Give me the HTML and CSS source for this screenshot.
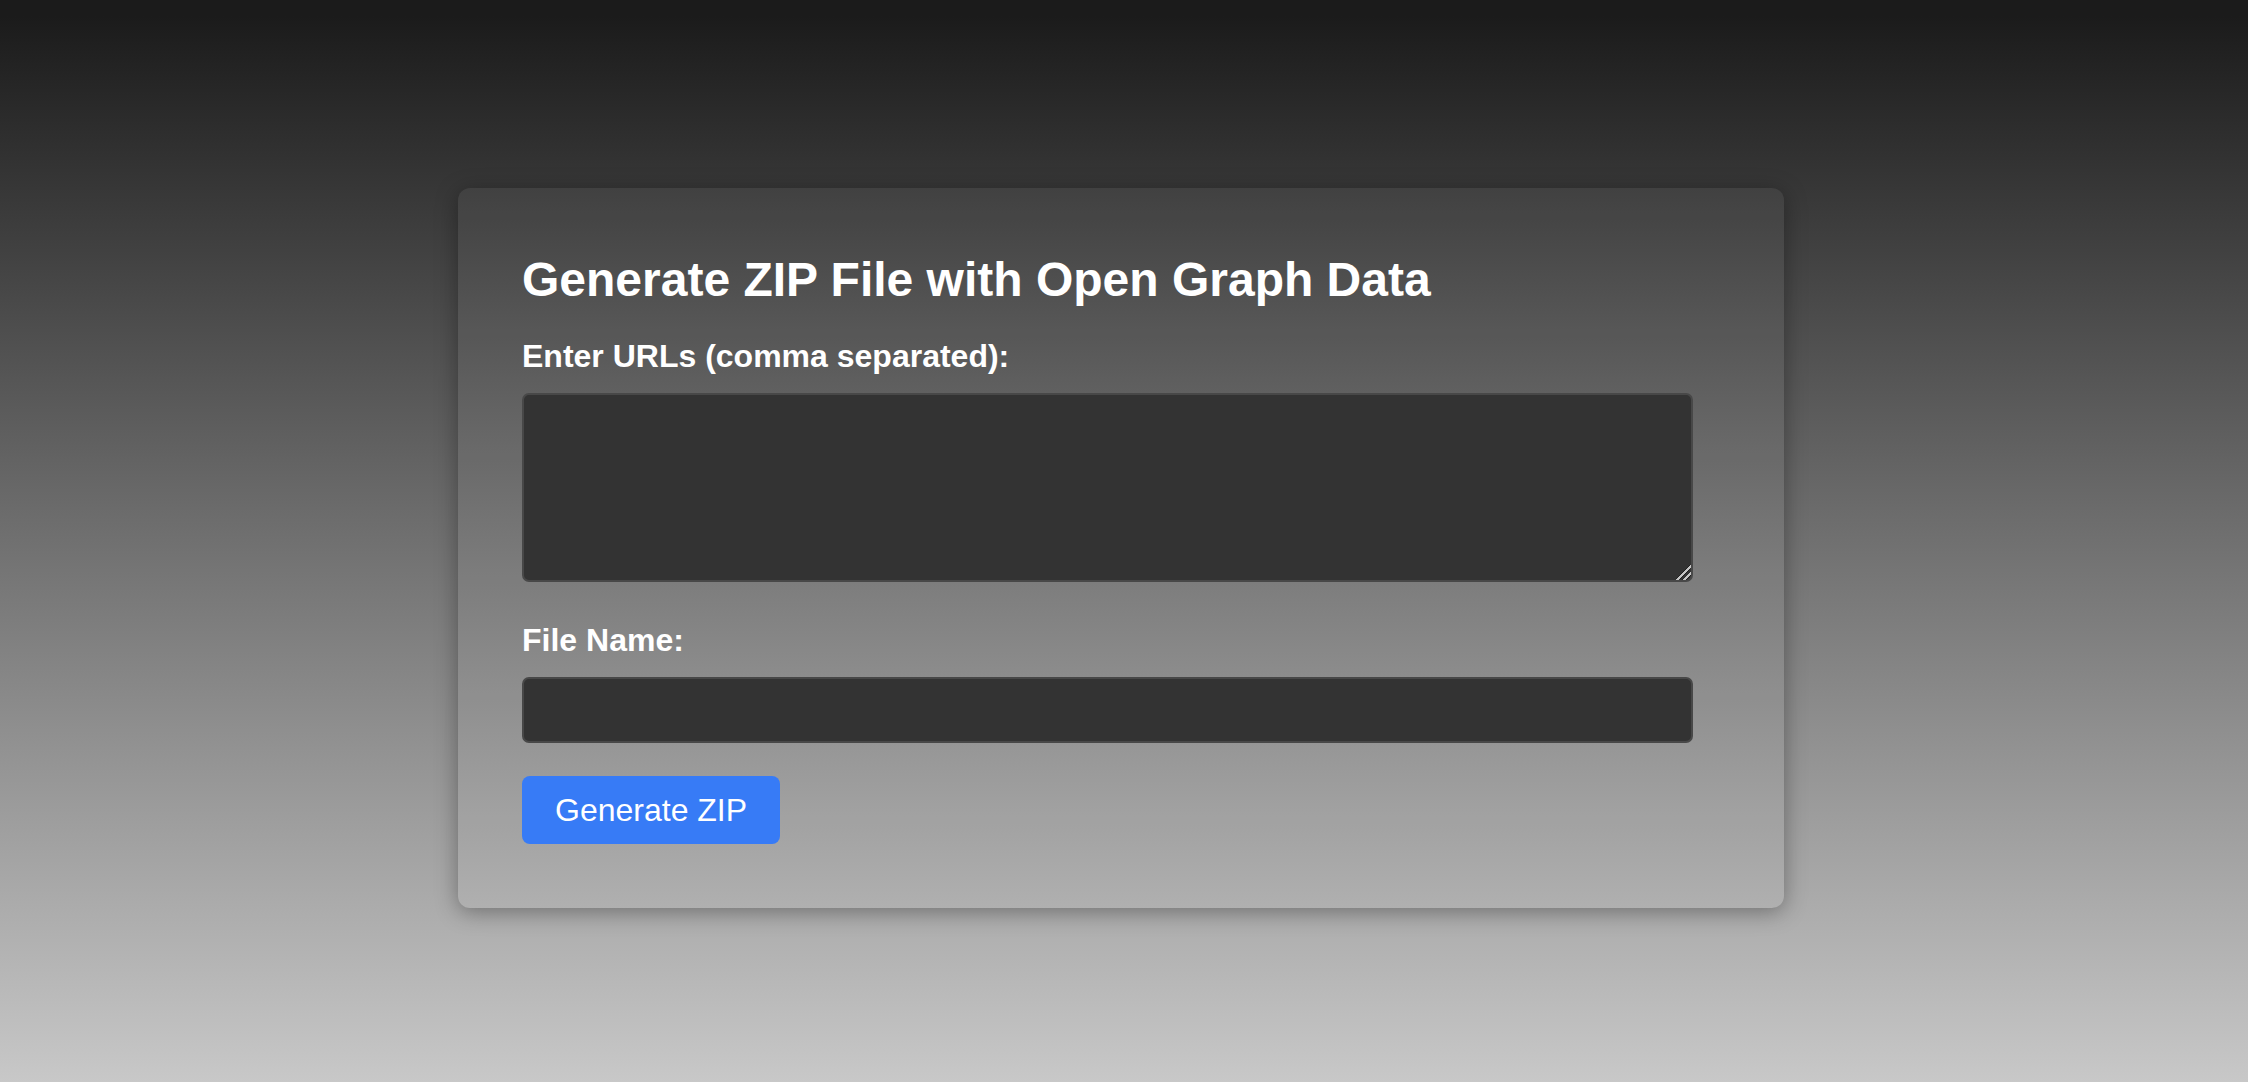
FILE: index.html
```html
<!DOCTYPE html>
<html lang="en">
<head>
<meta charset="utf-8">
<title>Generate ZIP File with Open Graph Data</title>
<link rel="stylesheet" href="styles.css">
</head>
<body>
<main class="page">
  <form class="card">
    <h1 class="title">Generate ZIP File with Open Graph Data</h1>
    <label class="label" for="urls">Enter URLs (comma separated):</label>
    <textarea id="urls" class="field field-area"></textarea>
    <label class="label" for="fname">File Name:</label>
    <input id="fname" class="field field-input" type="text">
    <button type="button" class="btn">Generate ZIP</button>
  </form>
</main>
</body>
</html>
```
FILE: styles.css
```css
html, body {
  margin: 0;
  padding: 0;
}
body {
  min-height: 1082px;
  background: linear-gradient(180deg, #1b1b1b 0%, #1b1b1b 1.5%, #c8c8c8 100%);
  font-family: "Liberation Sans", Arial, Helvetica, sans-serif;
  color: #fff;
}
.page {
  display: flex;
  justify-content: center;
  padding-top: 188px;
  padding-right: 6px;
}
.card {
  width: 1198px;
  padding: 64px;
  border-radius: 12px;
  background: rgba(255, 255, 255, 0.05);
  box-shadow: 0 4px 22px rgba(0, 0, 0, 0.35);
}
.title {
  margin: 0 0 31px;
  font-size: 48px;
  font-weight: bold;
  line-height: normal;
}
.label {
  display: block;
  font-size: 32px;
  font-weight: bold;
  line-height: normal;
  margin-bottom: 18px;
}
.field {
  display: block;
  box-sizing: border-box;
  width: calc(100% - 27px);
  background: #333;
  border: 2px solid #484848;
  border-radius: 7px;
  color: #fff;
  font-family: inherit;
  font-size: 28px;
  padding: 8px 12px;
  margin: 0;
}
.field-area {
  height: 189px;
  margin-bottom: 40px;
  resize: vertical;
}
.field-area::-webkit-resizer {
  background:
    linear-gradient(135deg,
      transparent 0 46%,
      #222 46% 49%,
      #c4c4c4 49% 57%,
      #222 57% 60%,
      transparent 60% 70%,
      #222 70% 73%,
      #c4c4c4 73% 81%,
      #222 81% 84%,
      transparent 84%);
}
.field-input {
  height: 66px;
  margin-bottom: 33px;
}
.btn {
  display: block;
  height: 68px;
  padding: 0 33px;
  font-family: inherit;
  font-size: 32px;
  color: #fff;
  background: #377bf6;
  border: none;
  border-radius: 8px;
}
```
